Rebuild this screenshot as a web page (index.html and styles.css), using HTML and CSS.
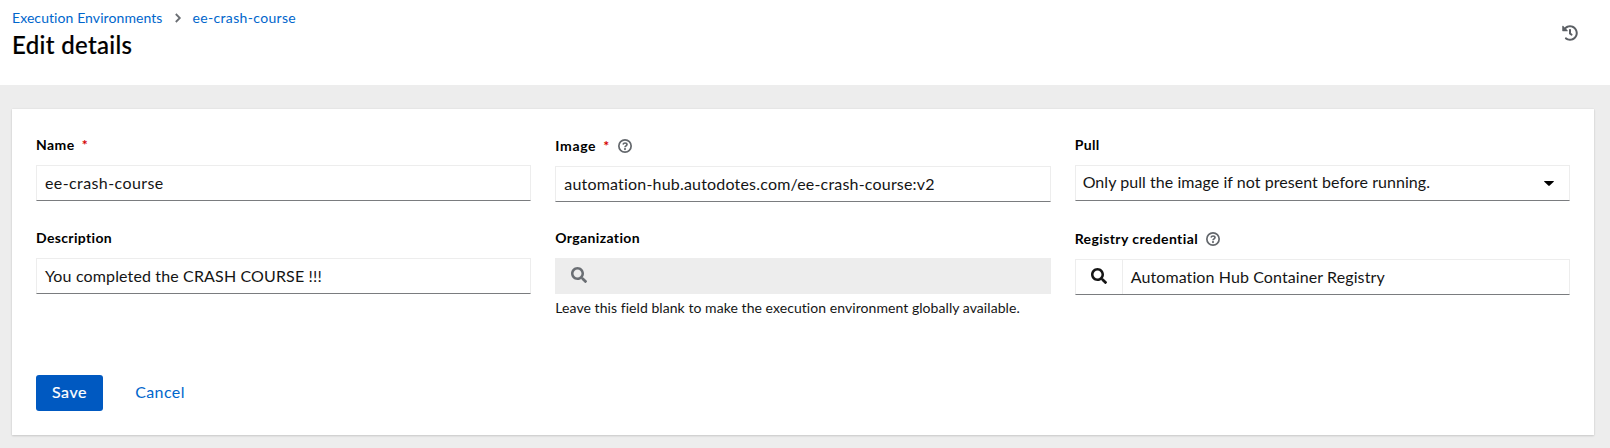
FILE: index.html
```html
<!DOCTYPE html>
<html lang="en">
<head>
<meta charset="utf-8">
<title>Edit details</title>
<link rel="stylesheet" href="styles.css">
</head>
<body>
<svg class="sprite" aria-hidden="true">
  <symbol id="search" viewBox="0 0 512 512"><path d="M505 442.700L405.300 343c-4.500-4.500-10.600-7-17-7H372c27.600-35.300 44-79.700 44-128C416 93.100 322.900 0 208 0S0 93.100 0 208s93.100 208 208 208c48.300 0 92.700-16.400 128-44v16.300c0 6.400 2.500 12.500 7 17l99.700 99.700c9.400 9.400 24.600 9.400 33.900 0l28.300-28.300c9.400-9.400 9.400-24.600.1-34zM208 336c-70.700 0-128-57.200-128-128 0-70.700 57.200-128 128-128 70.700 0 128 57.200 128 128 0 70.700-57.200 128-128 128z"/></symbol>
  <symbol id="help" viewBox="0 0 14 14"><g fill="none" stroke="currentColor"><circle cx="7" cy="7" r="6.150" stroke-width="1.700"/><path d="M5 5.400C5.300 4.500 6 4 7 4c1.200 0 2 .7 2 1.600C9 6.800 7 6.900 7 8.200" stroke-width="1.700"/></g><circle cx="7" cy="10.100" r="1.050"/></symbol>
</svg>
<header class="header">
  <div>
    <nav class="breadcrumb">
      <a class="crumb" href="#">Execution Environments</a>
      <svg class="chevron" viewBox="0 0 8 10"><path d="M1.800 1l4 4-4 4"/></svg>
      <a class="crumb crumb-current" href="#">ee-crash-course</a>
    </nav>
    <h1 class="title">Edit details</h1>
  </div>
  <svg class="history" viewBox="0 0 512 512"><path d="M504 255.531c.253 136.640-111.180 248.372-247.820 248.468-59.015.042-113.223-20.530-155.822-54.911-11.077-8.940-11.905-25.541-1.839-35.607l11.267-11.267c8.609-8.609 22.353-9.551 31.891-1.984C173.062 425.135 212.781 440 256 440c101.705 0 184-82.311 184-184 0-101.705-82.311-184-184-184-48.814 0-93.149 18.969-126.068 49.932l50.754 50.754c10.080 10.080 2.941 27.314-11.313 27.314H24c-8.837 0-16-7.163-16-16V38.627c0-14.254 17.234-21.393 27.314-11.314l49.372 49.372C129.209 34.136 189.552 8 256 8c136.810 0 247.747 110.780 248 247.531zm-180.912 78.784l9.823-12.630c8.138-10.463 6.253-25.542-4.210-33.679L288 256.349V152c0-13.255-10.745-24-24-24h-16c-13.255 0-24 10.745-24 24v135.651l65.409 50.874c10.463 8.137 25.541 6.253 33.679-4.210z"/></svg>
</header>
<main class="main">
  <form class="card">
    <div class="fields">
      <div class="field">
        <div class="label"><span class="word-name">Name</span><span class="required">*</span></div>
        <div class="control"><span class="value-name">ee-crash-course</span></div>
      </div>
      <div class="field">
        <div class="label has-help"><span class="word-image">Image</span><span class="required">*</span><svg class="help"><use href="#help"/></svg></div>
        <div class="control"><span class="value-image">automation-hub.autodotes.com/ee-crash-course:v2</span></div>
      </div>
      <div class="field">
        <div class="label">Pull</div>
        <div class="control select"><span class="value-pull">Only pull the image if not present before running.</span><svg class="caret" viewBox="0 0 10 5"><path d="M.7 0h8.600q1 0 .4.800L5.700 4.600q-.7.600-1.400 0L.3.800Q-.3 0 .7 0z"/></svg></div>
      </div>
      <div class="field">
        <div class="label">Description</div>
        <div class="control"><span class="value-description">You completed the CRASH COURSE !!!</span></div>
      </div>
      <div class="field">
        <div class="label">Organization</div>
        <div class="control disabled"><span class="lookup"><svg class="search"><use href="#search"/></svg></span></div>
        <div class="hint">Leave this field blank to make the execution environment globally available.</div>
      </div>
      <div class="field">
        <div class="label has-help"><span class="word-registry">Registry credential</span><svg class="help"><use href="#help"/></svg></div>
        <div class="control with-lookup"><span class="lookup"><svg class="search"><use href="#search"/></svg></span><span class="value-registry">Automation Hub Container Registry</span></div>
      </div>
    </div>
    <div class="actions">
      <button class="button primary" type="button">Save</button>
      <button class="button link" type="button">Cancel</button>
    </div>
  </form>
</main>
</body>
</html>
```

FILE: styles.css
```css
* { box-sizing: border-box; }
body { margin: 0; height: 448px; overflow: hidden; display: flex; flex-direction: column; background: #ededed; color: #151515; font-family: Lato, "Liberation Sans", sans-serif; font-size: 16px; }
svg { display: block; flex: none; fill: currentColor; }
.sprite { position: absolute; width: 0; height: 0; }

.header { height: 85px; flex: none; display: flex; justify-content: space-between; padding: 8px 32px 0 12px; background: #fff; }
.breadcrumb { display: flex; align-items: center; height: 20px; font-size: 14px; line-height: 20px; }
.crumb { color: #06c; text-decoration: none; letter-spacing: .08px; white-space: nowrap; }
.crumb-current { letter-spacing: .34px; }
.chevron { width: 8px; height: 10px; margin: 0 11px 0 11px; fill: none; stroke: #6a6e73; stroke-width: 1.8; }
.title { margin: 2px 0 0; color: #000; font-size: 24px; line-height: 30px; font-weight: 500; letter-spacing: .34px; -webkit-text-stroke: .2px #000; }
.history { width: 16px; height: 16px; margin-top: 17px; color: #5b5f64; }

.main { padding: 24px 16px 13px 12px; }
.card { height: 326px; padding: 24px; background: #fff; box-shadow: 0 1px 2px rgba(3, 3, 3, .14), 0 0 2px rgba(3, 3, 3, .07); }
.fields { display: grid; grid-template-columns: repeat(3, 1fr); gap: 24px; height: 242px; grid-template-rows: 69px 1fr; }
.label { display: flex; align-items: center; height: 24px; margin-bottom: 8px; color: #000; font-size: 14px; font-weight: 700; line-height: 24px; letter-spacing: .35px; }
.has-help { height: 25px; padding-top: 1px; }
.word-name { letter-spacing: .45px; }
.word-image { letter-spacing: .65px; }
.word-registry { letter-spacing: .4px; }
.required { width: 6px; margin-left: 7px; color: #d40000; }
.help { width: 14px; height: 14px; margin-left: 8px; color: #63676c; }
.required + .help { margin-left: 9px; }

.control { display: flex; align-items: center; height: 36px; padding: 0 8px; border: 1px solid #ededed; border-bottom-color: #7a7c7f; white-space: nowrap; line-height: 24px; }
.value-name { letter-spacing: .4px; }
.value-image { letter-spacing: .19px; }
.value-description { letter-spacing: .14px; }
.value-pull { letter-spacing: .05px; }
.value-registry { letter-spacing: .1px; padding-left: 8px; }
.select { justify-content: space-between; padding: 0 15px 2px 7px; }
.caret { width: 10px; height: 5px; margin-top: 3px; color: #000; }
.lookup { display: flex; align-items: center; width: 47px; height: 34px; padding: 0 0 2px 15px; border-right: 1px solid #ededed; }
.search { width: 16px; height: 16px; }
.with-lookup, .disabled { padding-left: 0; }
.disabled { background: #ededed; border-color: #ededed; color: #6a6e73; }
.hint { padding-top: 3px; font-size: 14px; line-height: 21px; letter-spacing: .06px; white-space: nowrap; }

.actions { display: flex; gap: 16px; }
.button { height: 36px; padding: 0 0 3px; border: 0; background: none; font: inherit; }
.primary { width: 67px; border-radius: 3px; background: #0059c1; color: #fff; letter-spacing: .6px; -webkit-text-stroke: .2px #fff; }
.link { width: 82px; color: #06c; letter-spacing: .4px; }
```
